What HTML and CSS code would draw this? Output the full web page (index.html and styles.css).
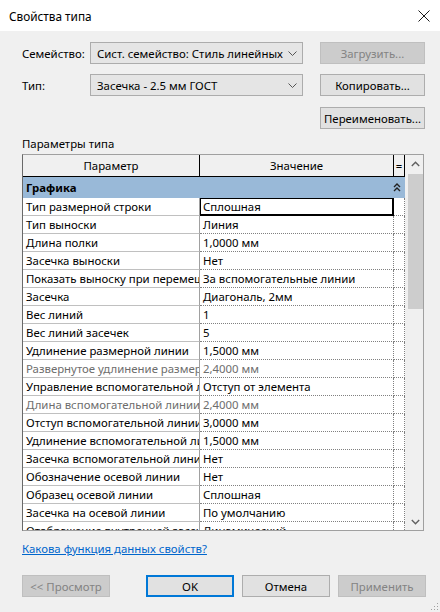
FILE: index.html
```html
<!DOCTYPE html>
<html lang="ru">
<head>
<meta charset="utf-8">
<title>Свойства типа</title>
<link rel="stylesheet" href="styles.css">
</head>
<body>
<div class="dialog">
  <div class="titlebar">
    <span class="title">Свойства типа</span>
    <svg class="close" width="12" height="12" viewBox="0 0 12 12"><path d="M0.5 0.5 L11.5 11.5 M11.5 0.5 L0.5 11.5" stroke="#1a1a1a" stroke-width="1"/></svg>
  </div>
  <div class="content">
    <div class="formrow">
      <span class="label">Семейство:</span>
      <div class="combo"><span class="combo-text">Сист. семейство: Стиль линейных размеров</span><svg class="caret" width="9" height="5" viewBox="0 0 9 5"><path d="M0.5 0.5 L4.5 4.5 L8.5 0.5" fill="none" stroke="#555" stroke-width="1"/></svg></div>
      <button class="btn disabled">Загрузить...</button>
    </div>
    <div class="formrow r2">
      <span class="label">Тип:</span>
      <div class="combo"><span class="combo-text">Засечка - 2.5 мм ГОСТ</span><svg class="caret" width="9" height="5" viewBox="0 0 9 5"><path d="M0.5 0.5 L4.5 4.5 L8.5 0.5" fill="none" stroke="#555" stroke-width="1"/></svg></div>
      <button class="btn">Копировать...</button>
    </div>
    <div class="formrow r3">
      <span class="label"></span>
      <span></span>
      <button class="btn">Переименовать...</button>
    </div>
    <div class="section-label">Параметры типа</div>
    <div class="gridbox">
      <div class="grid">
        <div class="hrow">
          <div class="hcell c1">Параметр</div>
          <div class="hcell c2">Значение</div>
          <div class="hcell c3">=</div>
        </div>
        <div class="group">
          <span class="gtitle">Графика</span>
          <svg class="gchev" width="8" height="9" viewBox="0 0 8 9"><path d="M1 4 L4 1 L7 4 M1 8 L4 5 L7 8" fill="none" stroke="#222" stroke-width="1.4"/></svg>
        </div>
        <div class="rows">
          <div class="row"><div class="c1">Тип размерной строки</div><div class="c2 sel">Сплошная</div><div class="c3"></div></div>
          <div class="row"><div class="c1">Тип выноски</div><div class="c2">Линия</div><div class="c3"></div></div>
          <div class="row"><div class="c1">Длина полки</div><div class="c2">1,0000 мм</div><div class="c3"></div></div>
          <div class="row"><div class="c1">Засечка выноски</div><div class="c2">Нет</div><div class="c3"></div></div>
          <div class="row"><div class="c1">Показать выноску при перемещении текста</div><div class="c2">За вспомогательные линии</div><div class="c3"></div></div>
          <div class="row"><div class="c1">Засечка</div><div class="c2">Диагональ, 2мм</div><div class="c3"></div></div>
          <div class="row"><div class="c1">Вес линий</div><div class="c2">1</div><div class="c3"></div></div>
          <div class="row"><div class="c1">Вес линий засечек</div><div class="c2">5</div><div class="c3"></div></div>
          <div class="row"><div class="c1">Удлинение размерной линии</div><div class="c2">1,5000 мм</div><div class="c3"></div></div>
          <div class="row dim"><div class="c1">Развернутое удлинение размерной линии</div><div class="c2">2,4000 мм</div><div class="c3"></div></div>
          <div class="row"><div class="c1">Управление вспомогательной линией</div><div class="c2">Отступ от элемента</div><div class="c3"></div></div>
          <div class="row dim"><div class="c1">Длина вспомогательной линии</div><div class="c2">2,4000 мм</div><div class="c3"></div></div>
          <div class="row"><div class="c1">Отступ вспомогательной линии</div><div class="c2">3,0000 мм</div><div class="c3"></div></div>
          <div class="row"><div class="c1">Удлинение вспомогательной линии</div><div class="c2">1,5000 мм</div><div class="c3"></div></div>
          <div class="row"><div class="c1">Засечка вспомогательной линии</div><div class="c2">Нет</div><div class="c3"></div></div>
          <div class="row"><div class="c1">Обозначение осевой линии</div><div class="c2">Нет</div><div class="c3"></div></div>
          <div class="row"><div class="c1">Образец осевой линии</div><div class="c2">Сплошная</div><div class="c3"></div></div>
          <div class="row"><div class="c1">Засечка на осевой линии</div><div class="c2">По умолчанию</div><div class="c3"></div></div>
          <div class="row"><div class="c1">Отображение внутренней засечки</div><div class="c2">Динамический</div><div class="c3"></div></div>
        </div>
      </div>
      <div class="scrollbar">
        <div class="arrow"><svg width="9" height="6" viewBox="0 0 9 6"><path d="M0.8 5 L4.5 1.3 L8.2 5" fill="none" stroke="#606060" stroke-width="1.4"/></svg></div>
        <div class="track"><div class="thumb"></div></div>
        <div class="arrow"><svg width="9" height="6" viewBox="0 0 9 6"><path d="M0.8 1 L4.5 4.7 L8.2 1" fill="none" stroke="#606060" stroke-width="1.4"/></svg></div>
      </div>
    </div>
    <a class="help" href="#">Какова функция данных свойств?</a>
    <div class="buttons">
      <button class="btn wide disabled">&lt;&lt; Просмотр</button>
      <div class="right">
        <button class="btn wide default">OK</button>
        <button class="btn wide">Отмена</button>
        <button class="btn wide disabled">Применить</button>
      </div>
    </div>
  </div>
  <svg class="grip" width="10" height="10" viewBox="0 0 10 10"><g fill="#a0a0a0"><rect x="8" y="2" width="1" height="1"/><rect x="5" y="5" width="1" height="1"/><rect x="8" y="5" width="1" height="1"/><rect x="2" y="8" width="1" height="1"/><rect x="5" y="8" width="1" height="1"/><rect x="8" y="8" width="1" height="1"/></g></svg>
</div>
</body>
</html>
```

FILE: styles.css
```css
* { box-sizing: border-box; }
html, body { margin: 0; padding: 0; }
body {
  width: 440px;
  height: 612px;
  background: #f0f0f0;
  font-family: "Noto Sans", "Liberation Sans", sans-serif;
  font-size: 11.4px;
  color: #000;
  overflow: hidden;
}
.dialog { position: relative; width: 440px; height: 612px; }
.titlebar {
  height: 31px;
  background: #fff;
  display: flex;
  align-items: center;
  justify-content: space-between;
  padding: 0 10px 0 9px;
  font-size: 11.8px;
}
.title { color: #000; }
.content { padding: 11px 16px 0 22px; }
.formrow {
  display: grid;
  grid-template-columns: 68px 213px 105px;
  column-gap: 0;
  align-items: center;
  height: 22px;
}
.formrow .btn { margin-left: 17px; width: 105px; }
.r2 { margin-top: 10px; }
.r3 { margin-top: 11px; }
.combo {
  height: 22px;
  background: #e5e5e5;
  border: 1px solid #acacac;
  display: flex;
  align-items: center;
  padding: 0 5px 0 6px;
  gap: 5px;
  overflow: hidden;
}
.combo-text { flex: 1; white-space: nowrap; overflow: hidden; }
.caret { flex: none; }
.btn {
  font-family: inherit;
  font-size: 11.4px;
  height: 22px;
  background: #e1e1e1;
  border: 1px solid #adadad;
  color: #000;
  padding: 0;
  margin: 0;
  white-space: nowrap;
}
.btn.disabled { background: #cccccc; border-color: #bfbfbf; color: #838383; }
.btn.default { border-color: #0078d7; box-shadow: inset 0 0 0 1px #0078d7; }
.section-label { margin-top: 6px; height: 18px; line-height: 18px; }
.gridbox {
  display: flex;
  width: 402px;
  height: 377px;
  margin-top: 1px;
  border: 1px solid #a0a0a0;
  border-left-color: #696969;
  background: #f0f0f0;
}
.grid { width: 382px; display: flex; flex-direction: column; overflow: hidden; background: #fff; }
.hrow {
  display: grid;
  grid-template-columns: 177px 194px 11px;
  height: 22px;
  background: #f0f0f0;
  border-bottom: 1px solid #000;
}
.hcell {
  border-right: 1px solid #000;
  display: flex;
  align-items: center;
  justify-content: center;
}
.group {
  height: 21px;
  background: #99b9d8;
  display: flex;
  align-items: center;
  justify-content: space-between;
  padding: 0 4px 0 3px;
  font-weight: bold;
}
.rows { flex: 1; overflow: hidden; }
.row {
  display: grid;
  grid-template-columns: 177px 194px 11px;
  height: 18px;
}
.row > div {
  white-space: nowrap;
  overflow: hidden;
  line-height: 17px;
}
.row .c1 { padding-left: 3px; border-right: 1px solid #a0a0a0; border-bottom: 1px solid #c0c0c0; }
.row .c2 { padding-left: 3px; border-right: 1px dotted #808080; border-bottom: 1px dotted #808080; }
.row .c3 { border-right: 1px dotted #808080; border-bottom: 1px dotted #808080; }
.row .c2.sel { border: 1px solid #000; border-right-width: 2px; border-bottom-width: 2px; padding-left: 2px; line-height: 15px; }
.row.dim { color: #6d6d6d; }
.scrollbar {
  width: 18px;
  display: flex;
  flex-direction: column;
  background: #f0f0f0;
}
.arrow { height: 17px; display: flex; align-items: center; justify-content: center; padding-left: 3px; }
.track { flex: 1; padding: 2px 0 0 3px; }
.thumb { height: 135px; background: #cdcdcd; }
.help {
  display: inline-block;
  margin-top: 10px;
  color: #0066cc;
  text-decoration: underline;
  line-height: 16px;
}
.buttons {
  display: flex;
  justify-content: space-between;
  margin-top: 18px;
  margin-right: -2px;
}
.right { display: flex; gap: 8px; }
.wide { width: 88px; }
.grip { position: absolute; right: 1px; bottom: 1px; }
```
